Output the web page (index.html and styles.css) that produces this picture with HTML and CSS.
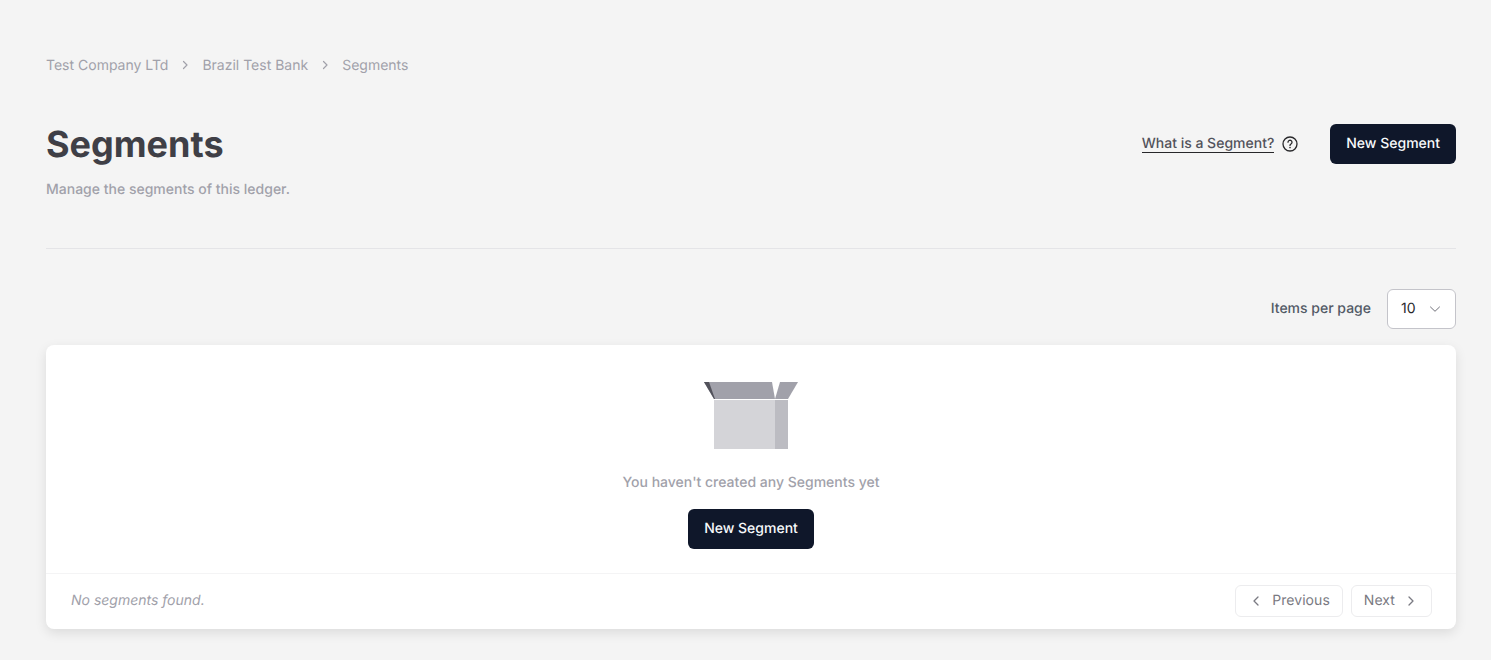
FILE: index.html
```html
<!DOCTYPE html>
<html lang="en">
<head>
  <meta charset="UTF-8">
  <meta name="viewport" content="width=device-width, initial-scale=1.0">
  <title>Segments</title>
  <link rel="stylesheet" href="styles.css">
</head>
<body>
  <main class="page">
    <nav class="breadcrumb">
      <a href="#">Test Company LTd</a>
      <svg class="crumb-sep" width="16" height="16" viewBox="0 0 16 16" fill="none"><path d="M6.5 4.500 10 8l-3.500 3.500" stroke="currentColor" stroke-width="1.200" stroke-linecap="round" stroke-linejoin="round"/></svg>
      <a href="#">Brazil Test Bank</a>
      <svg class="crumb-sep" width="16" height="16" viewBox="0 0 16 16" fill="none"><path d="M6.5 4.500 10 8l-3.500 3.500" stroke="currentColor" stroke-width="1.200" stroke-linecap="round" stroke-linejoin="round"/></svg>
      <span>Segments</span>
    </nav>

    <header class="page-header">
      <div>
        <h1>Segments</h1>
        <p class="subtitle">Manage the segments of this ledger.</p>
      </div>
      <div class="header-actions">
        <a class="help-link" href="#">What is a Segment?</a>
        <svg class="help-icon" width="16" height="16" viewBox="0 0 16 16" fill="none">
          <circle cx="8" cy="8" r="7" stroke="currentColor" stroke-width="1.300"/>
          <path d="M6 6.200a2 2 0 1 1 3 1.800c-.7.400-1 .8-1 1.400" stroke="currentColor" stroke-width="1.300" stroke-linecap="round"/>
          <circle cx="8" cy="11.600" r=".8" fill="currentColor"/>
        </svg>
        <button class="btn-primary" type="button">New Segment</button>
      </div>
    </header>

    <hr class="divider">

    <div class="page-size">
      <label>Items per page</label>
      <div class="select">
        <span>10</span>
        <svg width="12" height="12" viewBox="0 0 12 12" fill="none"><path d="M1.500 4 6 8.300 10.500 4" stroke="#71717a" stroke-width="1" stroke-linecap="round" stroke-linejoin="round"/></svg>
      </div>
    </div>

    <section class="card">
      <div class="empty">
        <svg class="box" width="94" height="67" viewBox="0 0 94 67">
          <polygon points="0,0 68,0 71,17 10,17" fill="#a1a1aa"/>
          <polygon points="0,0 5,0 11,17 10,17" fill="#52525b"/>
          <polygon points="76,0 94,0 84,17 71,17" fill="#a1a1aa"/>
          <rect x="10" y="18" width="61" height="49" fill="#d4d4d8"/>
          <rect x="71" y="18" width="13" height="49" fill="#bcbcc2"/>
        </svg>
        <p class="empty-text">You haven't created any Segments yet</p>
        <button class="btn-primary" type="button">New Segment</button>
      </div>
      <footer class="card-footer">
        <em class="footer-note">No segments found.</em>
        <div class="pager">
          <button class="btn-page" type="button">
            <svg width="16" height="16" viewBox="0 0 16 16" fill="none"><path d="M10 4 6 8l4 4" stroke="currentColor" stroke-width="1.300" stroke-linecap="round" stroke-linejoin="round"/></svg>
            Previous
          </button>
          <button class="btn-page" type="button">
            Next
            <svg width="16" height="16" viewBox="0 0 16 16" fill="none"><path d="M6 4l4 4-4 4" stroke="currentColor" stroke-width="1.300" stroke-linecap="round" stroke-linejoin="round"/></svg>
          </button>
        </div>
      </footer>
    </section>
  </main>
</body>
</html>
```

FILE: styles.css
```css
* {
  box-sizing: border-box;
}
body {
  margin: 0;
  background: #f4f4f4;
  font-family: Inter, "Liberation Sans", sans-serif;
  color: #3f3f46;
  text-rendering: geometricPrecision;
}
.page {
  padding: 56px 35px 31px 46px;
}
.breadcrumb {
  display: flex;
  align-items: center;
  gap: 8px;
  height: 18px;
  font-size: 14px;
  color: #a1a1aa;
}
.breadcrumb a {
  color: inherit;
  text-decoration: none;
}
.crumb-sep {
  margin: 0 1px;
}
.page-header {
  display: flex;
  justify-content: space-between;
  align-items: flex-start;
  margin-top: 50px;
}
h1 {
  margin: 0;
  font-size: 36px;
  line-height: 40px;
  font-weight: 700;
  color: #3f3f46;
}
.subtitle {
  margin: 16px 0 0;
  font-size: 14px;
  line-height: 20px;
  font-weight: 500;
  color: #a1a1aa;
}
.header-actions {
  display: flex;
  align-items: center;
}
.help-link {
  margin-bottom: 1px;
  font-size: 14px;
  font-weight: 500;
  line-height: 17px;
  color: #52525b;
  text-decoration: none;
  border-bottom: 1px solid #27272a;
}
.help-icon {
  margin-left: 8px;
  margin-right: 32px;
  color: #27272a;
}
.btn-primary {
  height: 40px;
  padding: 0 16px 1px;
  border: none;
  border-radius: 6px;
  background: #0f172a;
  color: #f8fafc;
  font-family: inherit;
  font-size: 14px;
  font-weight: 500;
  text-rendering: inherit;
  cursor: pointer;
}
.divider {
  margin: 48px 0 0;
  border: none;
  border-top: 1px solid #e4e4e7;
}
.page-size {
  display: flex;
  justify-content: flex-end;
  align-items: center;
  gap: 16px;
  margin-top: 40px;
}
.page-size label {
  margin-bottom: 1px;
  font-size: 14px;
  font-weight: 500;
  color: #525a66;
}
.select {
  display: flex;
  align-items: center;
  justify-content: space-between;
  width: 69px;
  height: 40px;
  padding: 0 14px 0 13px;
  background: #fff;
  border: 1px solid #c4c4ca;
  border-radius: 6px;
  font-size: 14px;
  color: #27272a;
}
.select span {
  margin-bottom: 1px;
}
.card {
  margin-top: 16px;
  background: #fff;
  border-radius: 8px;
  box-shadow: 0 4px 12px rgba(0, 0, 0, 0.1);
}
.empty {
  display: flex;
  flex-direction: column;
  align-items: center;
  padding: 37px 0 24px;
}
.empty-text {
  margin: 24px 0 16px;
  font-size: 14px;
  line-height: 20px;
  font-weight: 500;
  color: #a1a1aa;
}
.card-footer {
  display: flex;
  justify-content: space-between;
  align-items: center;
  height: 56px;
  padding: 0 24px 2px 25px;
  border-top: 1px solid #f4f4f5;
  font-size: 14px;
  color: #a1a1aa;
}
.pager {
  display: flex;
  gap: 8px;
}
.btn-page {
  display: flex;
  align-items: center;
  gap: 8px;
  height: 32px;
  padding: 0 12px 1px;
  background: #fff;
  border: 1px solid #ececee;
  border-radius: 6px;
  font-family: inherit;
  font-size: 14px;
  letter-spacing: 0.06px;
  text-rendering: inherit;
  color: #7a7a82;
  cursor: pointer;
}
.btn-page svg {
  margin-top: 1px;
}
```
